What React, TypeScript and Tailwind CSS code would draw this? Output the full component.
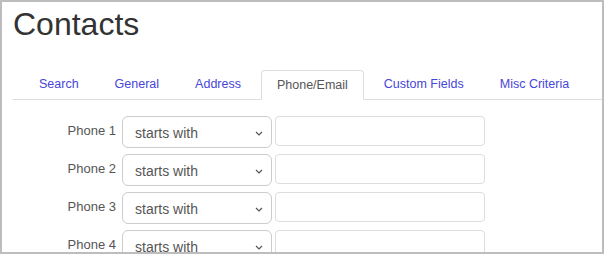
const tabs = ["Search", "General", "Address", "Phone/Email", "Custom Fields", "Misc Criteria"];
const active = "Phone/Email";
const rows = ["Phone 1", "Phone 2", "Phone 3", "Phone 4"];

function Chevron() {
  return (
    <svg width="8" height="5" viewBox="0 0 8 5" className="text-[#555]">
      <path d="M1 1l3 3 3-3" fill="none" stroke="currentColor" strokeWidth="1.2" />
    </svg>
  );
}

function Row({ label }: { label: string }) {
  return (
    <div className="flex items-start">
      <div className="w-[114px] pt-[5px] text-right text-[13px] leading-[20px] text-[#555]">{label}</div>
      <div className="ml-[6px] flex h-[32px] w-[150px] items-center justify-between rounded-[6px] border border-[#ccc] pl-[12px] pr-[8px] pt-[3px] text-[14px] text-[#555]">
        <span>starts with</span>
        <Chevron />
      </div>
      <div className="ml-[3px] h-[30px] w-[210px] rounded-[4px] border border-[#ddd]" />
    </div>
  );
}

export default function App() {
  return (
    <div
      className="h-[254px] w-[604px] overflow-hidden border-2 border-[#bdbdbd] bg-white"
      style={{ fontFamily: '"Liberation Sans", Arial, sans-serif' }}
    >
      <h1 className="pl-[11px] pt-[2px] text-[32px] leading-[40px] text-[#333]">Contacts</h1>
      <div className="ml-[11px] mt-[26px] flex gap-[4px] border-b border-[#ddd] pl-[10px]">
        {tabs.map((t) =>
          t === active ? (
            <div
              key={t}
              className="-mb-px flex h-[30px] items-center rounded-t-[4px] border border-[#ddd] border-b-white bg-white px-[15px] text-[12.5px] text-[#555]"
            >
              {t}
            </div>
          ) : (
            <div key={t} className="flex h-[29px] items-center px-[16px] text-[12.5px] text-[#4646d8]">
              {t}
            </div>
          )
        )}
      </div>
      <div className="mt-[16px] flex flex-col gap-[6px]">
        {rows.map((r) => (
          <Row key={r} label={r} />
        ))}
      </div>
    </div>
  );
}
